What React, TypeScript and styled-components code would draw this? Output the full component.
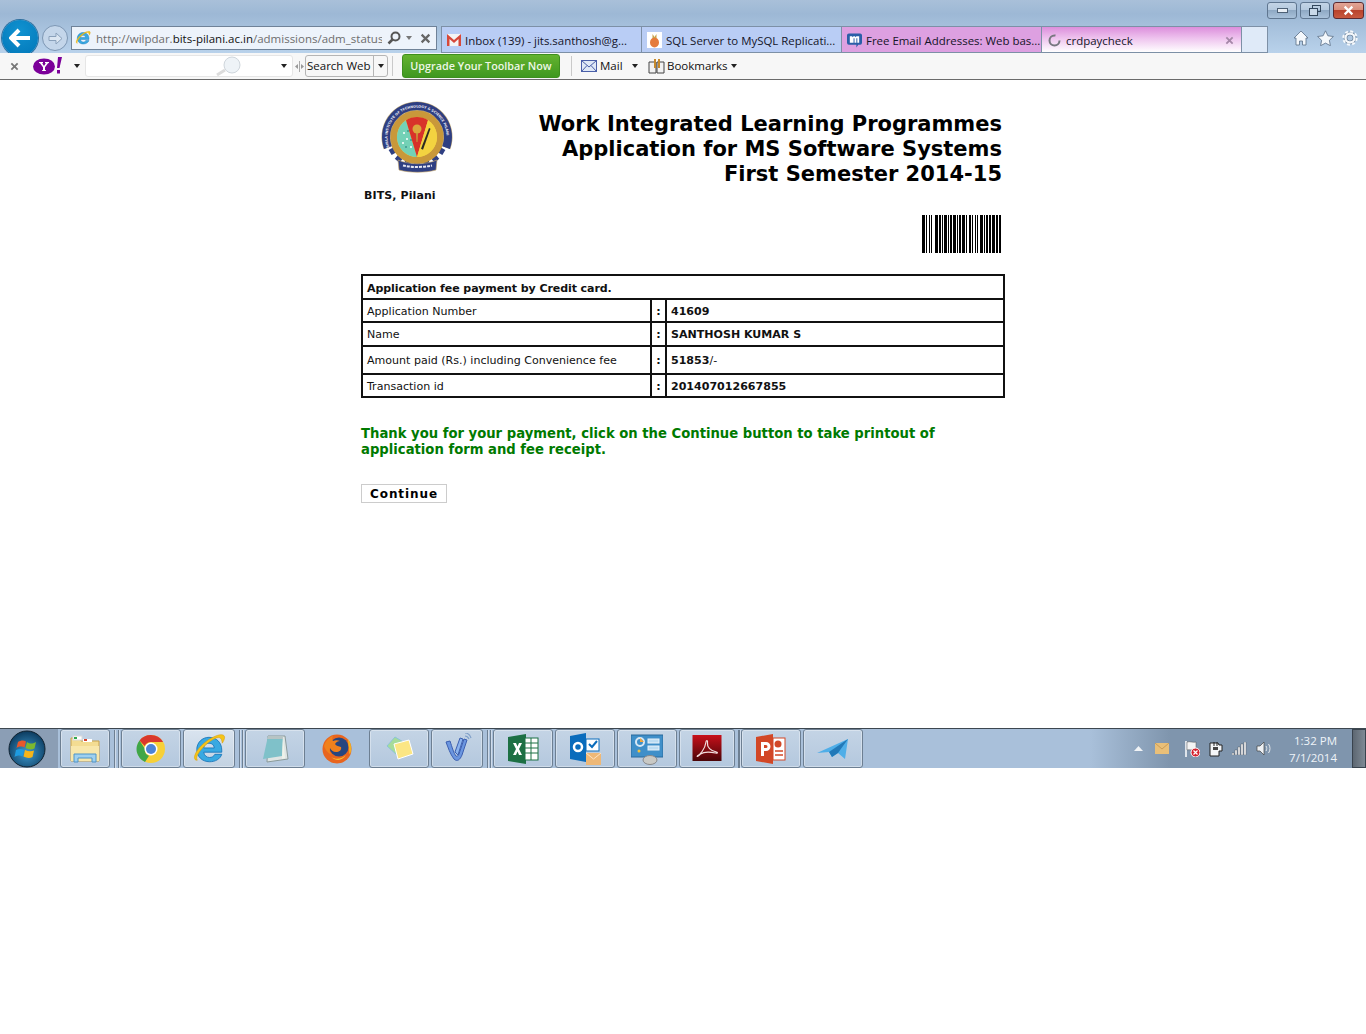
import styled, { createGlobalStyle } from 'styled-components'
import type { ReactNode } from 'react'

const GlobalStyle = createGlobalStyle`
  html, body {
    margin: 0;
    padding: 0;
    background: #fff;
  }
  body {
    font-family: 'DejaVu Sans', sans-serif;
  }
`

const Screen = styled.div`
  width: 1366px;
  height: 1034px;
  overflow: hidden;
  background: #fff;
  display: flex;
  flex-direction: column;
`

/* browser chrome */
const Chrome = styled.header`
  height: 53px;
  flex: none;
  background: linear-gradient(#a9c0d9 0, #9db8d5 14px, #b9d2eb 53px);
  display: flex;
  flex-direction: column;
`

const TitleRow = styled.div`
  height: 26px;
  flex: none;
  display: flex;
  justify-content: flex-end;
  padding: 2px 2px 0 0;
  gap: 3px;
  box-sizing: border-box;
`

const WinButton = styled.div<{ $w: number; $close?: boolean }>`
  width: ${p => p.$w}px;
  height: 17px;
  box-sizing: border-box;
  border: 1px solid ${p => (p.$close ? '#5c2a30' : '#5f7690')};
  border-radius: 3px;
  display: flex;
  align-items: center;
  justify-content: center;
  background: ${p =>
    p.$close
      ? 'linear-gradient(#e2a596 0, #d88e7c 45%, #b9432c 50%, #c8593f 100%)'
      : 'linear-gradient(#c3d4e6 0, #b5c9de 45%, #8fa9c4 50%, #a9c1da 100%)'};
`

const NavRow = styled.div`
  height: 27px;
  flex: none;
  display: flex;
  align-items: flex-start;
`

const BackCluster = styled.div`
  width: 71px;
  height: 27px;
  flex: none;
  position: relative;
`

const BackCircle = styled.div`
  position: absolute;
  left: 2px;
  top: -6px;
  width: 36px;
  height: 36px;
  border-radius: 50%;
  background: radial-gradient(circle at 50% 30%, #1192d0, #0076b8);
  box-shadow: 0 0 0 1px #2d6f9f;
  display: flex;
  align-items: center;
  justify-content: center;
  z-index: 2;
`

const ForwardCircle = styled.div`
  position: absolute;
  left: 42px;
  top: -1px;
  width: 26px;
  height: 26px;
  box-sizing: border-box;
  border: 1px solid #7d97b4;
  border-radius: 50%;
  background: #c4d6ea;
  display: flex;
  align-items: center;
  justify-content: center;
`

const AddressBar = styled.div`
  width: 366px;
  height: 24px;
  box-sizing: border-box;
  flex: none;
  margin-right: 4px;
  border: 1px solid #6f8298;
  background: #edf3fb;
  display: flex;
  align-items: center;
  padding: 0 5px 0 3px;
  svg {
    flex: none;
  }
`

const UrlText = styled.div`
  flex: 1;
  min-width: 0;
  overflow: hidden;
  white-space: nowrap;
  margin-left: 5px;
  font: 11.5px 'Open Sans', sans-serif;
  color: #6d6d6d;
  b {
    font-weight: 400;
    color: #111;
  }
`

const AddressTools = styled.div`
  display: flex;
  flex: none;
  align-items: center;
  gap: 5px;
  margin-left: 5px;
`

const TabStrip = styled.div`
  display: flex;
  height: 27px;
  border-top: 1px solid #7d90a6;
  border-bottom: 1px solid #7d90a6;
  box-sizing: border-box;
`

const tabBackground = {
  blue: '#b9cdf5',
  pink: '#dda0e1',
  active: 'linear-gradient(#dc8edc 0, #eec3ee 45%, #ffffff 100%)',
  blank: '#dfeaf8',
}

const Tab = styled.div<{ $w: number; $tone: keyof typeof tabBackground }>`
  width: ${p => p.$w}px;
  box-sizing: border-box;
  flex: none;
  border-left: 1px solid #7d90a6;
  background: ${p => tabBackground[p.$tone]};
  display: flex;
  align-items: center;
  padding: 1px 0 0 5px;
  gap: 4px;
  font: 11.45px 'Open Sans', sans-serif;
  color: #141428;
  white-space: nowrap;
  overflow: hidden;
  svg {
    flex: none;
  }
`

const TabEnd = styled(Tab)`
  border-right: 1px solid #7d90a6;
`

const TabClose = styled.span`
  margin-left: auto;
  margin-right: 7px;
  display: flex;
`

const ChromeIcons = styled.div`
  flex: 1;
  display: flex;
  justify-content: flex-end;
  gap: 8px;
  padding: 4px 8px 0 0;
`

/* yahoo toolbar */
const Toolbar = styled.div`
  height: 27px;
  flex: none;
  box-sizing: border-box;
  position: relative;
  z-index: 3;
  background: #f7f7f7;
  border-bottom: 1px solid #6b6b6b;
  display: flex;
  align-items: center;
  font: 11.5px 'Open Sans', sans-serif;
  color: #111;
`

const CloseMark = styled.span`
  width: 32px;
  padding-left: 10px;
  box-sizing: border-box;
  display: flex;
  flex: none;
`

const YahooBadge = styled.div`
  width: 32px;
  flex: none;
  display: flex;
`

const Caret = styled.span<{ $gap?: number; $after?: number; $color?: string }>`
  width: 0;
  height: 0;
  flex: none;
  margin-left: ${p => p.$gap ?? 0}px;
  margin-right: ${p => p.$after ?? 0}px;
  border-left: 3.5px solid transparent;
  border-right: 3.5px solid transparent;
  border-top: 4px solid ${p => p.$color ?? '#222'};
`

const SearchField = styled.div`
  width: 208px;
  height: 22px;
  margin-left: 5px;
  flex: none;
  box-sizing: border-box;
  background: #fff;
  border: 1px solid #e6e6e6;
  border-radius: 3px;
  display: flex;
  align-items: center;
  padding-left: 130px;
  gap: 37px;
`

const Grip = styled.span`
  flex: none;
  display: flex;
  width: 12px;
  justify-content: center;
`

const SearchButton = styled.div`
  width: 83px;
  height: 22px;
  box-sizing: border-box;
  flex: none;
  border: 1px solid #b5b5b5;
  border-radius: 3px;
  display: flex;
  align-items: center;
  padding-left: 1px;
`

const ToolLabel = styled.span`
  padding-bottom: 2px;
  white-space: nowrap;
`

const SearchLabel = styled(ToolLabel)`
  flex: 1;
`

const SearchDrop = styled.span`
  width: 13px;
  align-self: stretch;
  border-left: 1px solid #b5b5b5;
  display: flex;
  align-items: center;
  justify-content: center;
`

const Rule = styled.span<{ $left: number; $right: number }>`
  width: 1px;
  height: 20px;
  flex: none;
  background: #c9c9c9;
  margin: 0 ${p => p.$right}px 0 ${p => p.$left}px;
`

const UpgradeButton = styled.button`
  width: 158px;
  height: 24px;
  flex: none;
  padding: 0 0 2px;
  border: 1px solid #3e8f1e;
  border-radius: 3px;
  background: linear-gradient(#64b32f, #3f9820);
  color: #eef7e6;
  font: 600 10.8px 'Open Sans', sans-serif;
`

const ToolItem = styled.span<{ $w: number; $gap: number; $left?: number }>`
  width: ${p => p.$w}px;
  flex: none;
  margin-left: ${p => p.$left ?? 0}px;
  display: flex;
  align-items: center;
  gap: ${p => p.$gap}px;
`

/* page content */
const Page = styled.main`
  height: 648px;
  flex: none;
  display: flex;
  justify-content: center;
  background: #fff;
`

const Sheet = styled.div`
  width: 644px;
  display: flex;
  flex-direction: column;
`

const Masthead = styled.div`
  display: flex;
  justify-content: space-between;
  padding: 20px 3px 0;
  height: 194px;
  box-sizing: border-box;
`

const Crest = styled.div`
  display: flex;
  flex-direction: column;
  align-items: flex-start;
`

const CrestLogo = styled.div`
  margin-left: 15px;
  height: 89px;
`

const CrestName = styled.div`
  font-size: 11px;
  font-weight: 700;
  line-height: 14px;
  letter-spacing: 0.1px;
  color: #111;
`

const Titles = styled.div`
  display: flex;
  flex-direction: column;
  align-items: flex-end;
  padding-top: 12px;
`

const TitleLine = styled.h1`
  margin: 0;
  font-size: 21px;
  line-height: 25px;
  font-weight: 700;
  color: #000;
  white-space: nowrap;
`

const Barcode = styled.div`
  margin-top: 28px;
  height: 38px;
`

const InfoTable = styled.table`
  width: 644px;
  border-collapse: collapse;
  table-layout: fixed;
  font-size: 11.05px;
  color: #111;
`

const Column = styled.col<{ $w?: number }>`
  width: ${p => (p.$w ? `${p.$w}px` : 'auto')};
`

const Row = styled.tr<{ $h: number }>`
  height: ${p => p.$h}px;
`

const Cell = styled.td<{ $strong?: boolean; $center?: boolean; $tight?: boolean; $top: number }>`
  border: 2px solid #111;
  padding: ${p => p.$top}px ${p => (p.$center ? 0 : 4)}px 0;
  font-weight: ${p => (p.$strong ? 700 : 400)};
  text-align: ${p => (p.$center ? 'center' : 'left')};
  letter-spacing: ${p => (p.$tight ? '-0.1px' : 'normal')};
  white-space: nowrap;
  span {
    font-weight: 400;
  }
`

const Notice = styled.p`
  margin: 28px 0 0;
  width: 600px;
  font-size: 13.2px;
  line-height: 16px;
  font-weight: 700;
  color: #007a00;
`

const ContinueButton = styled.button`
  align-self: flex-start;
  margin-top: 26px;
  width: 86px;
  height: 19px;
  padding: 0;
  background: #fff;
  border: 1px solid #ccc;
  font: 700 12px 'DejaVu Sans', sans-serif;
  letter-spacing: 0.9px;
  color: #000;
`

/* taskbar */
const Taskbar = styled.footer`
  height: 40px;
  flex: none;
  box-sizing: border-box;
  border-top: 1px solid #3d4750;
  background: linear-gradient(90deg, #a9c0da 0, #a9c0da 1090px, #7f95ad 1170px, #7f95ad 100%);
  display: flex;
  align-items: stretch;
`

const StartArea = styled.div`
  width: 58px;
  flex: none;
  background: #8b9eb5;
  display: flex;
  align-items: center;
  padding-left: 8px;
  box-sizing: border-box;
  margin-right: 2px;
`

const TaskButton = styled.div<{ $w: number; $plain?: boolean; $active?: boolean }>`
  width: ${p => p.$w}px;
  flex: none;
  box-sizing: border-box;
  margin: 0 2px 0 0;
  border: ${p => (p.$plain ? '1px solid transparent' : '1px solid #6d7f92')};
  border-radius: 3px;
  background: ${p =>
    p.$plain
      ? 'transparent'
      : p.$active
        ? 'linear-gradient(#d9e4ef, #c3d2e2)'
        : 'linear-gradient(#c4d4e5, #b4c8de)'};
  box-shadow: ${p => (p.$plain ? 'none' : 'inset 0 0 0 1px rgba(255,255,255,.35)')};
  display: flex;
  align-items: center;
  justify-content: center;
`

const GroupGap = styled.div<{ $w: number }>`
  width: ${p => p.$w}px;
  flex: none;
  display: flex;
  justify-content: space-evenly;
  padding-top: 1px;
  box-sizing: border-box;
  &::before,
  &::after {
    content: '';
    width: 1px;
    background: #6d7f92;
    box-shadow: 1px 0 0 rgba(255, 255, 255, 0.45);
  }
`

const Tray = styled.div`
  margin-left: auto;
  display: flex;
  align-items: center;
`

const TrayIcons = styled.div`
  display: flex;
  align-items: center;
  gap: 8px;
`

const TrayArrow = styled.svg`
  margin-right: 4px;
`

const TrayMail = styled.svg`
  margin-right: 7px;
`

const Clock = styled.div`
  width: 60px;
  margin: 0 15px 0 5px;
  text-align: right;
  font: 11.5px/17px 'Open Sans', sans-serif;
  color: #eef3f8;
  flex: none;
`

const ShowDesktop = styled.div`
  width: 14px;
  align-self: stretch;
  flex: none;
  box-sizing: border-box;
  border: 1px solid #39434e;
  background: linear-gradient(90deg, #5d6772, #7f8a95);
`

const Blank = styled.div`
  flex: 1;
  background: #fff;
`

/* drawings */
const IeGlyph = ({ size }: { size: number }) => (
  <svg width={size} height={size} viewBox="0 0 32 32">
    <path d="M16 5c7 0 12 5 12 12v2H11c.5 3 2.600 5 5.500 5 2.200 0 4-1 5-3h6.500c-1.500 4.500-6 7-11.500 7C9.500 28 4.500 23 4.500 16.500S9.500 5 16 5Zm-5 10h10c-.3-2.700-2.200-4.500-5-4.500s-4.600 1.800-5 4.500Z" fill="#39a9e1" stroke="#1774b8" strokeWidth=".8" />
    <path d="M3 26c-3-4 5-14 13-19 6-3.700 12-5.700 14-3.700 1.500 1.500.2 4.700-1.500 7.200-.3-2.600-1-5-3-5.300C21 4.600 10 13 5.500 21 4.300 23.200 4 25 5 26.500c-.8.300-1.500.1-2-.5Z" fill="#f5c518" stroke="#d99a0a" strokeWidth=".5" />
  </svg>
)

const TinyX = ({ size, color }: { size: number; color: string }) => (
  <svg width={size} height={size} viewBox="0 0 10 10">
    <path d="M1.500 1.500 8.500 8.500M8.500 1.500 1.500 8.500" stroke={color} strokeWidth="2" />
  </svg>
)

const Crestmark = () => (
  <svg width="76" height="76" viewBox="0 0 76 76">
    <defs>
      <path id="crest-arc" d="M10.300 47.100A29.500 29.500 0 1 1 65.700 47.100" />
    </defs>
    <g fill="#2f3f82">
      {Array.from({ length: 18 }, (_, i) => (
        <rect key={i} x="35" y="6" width="6" height="8" transform={`rotate(${i * 20} 38 37)`} />
      ))}
    </g>
    <circle cx="38" cy="37" r="27" fill="#c9983a" />
    <path d="M8.900 47.600A31 31 0 1 1 67.100 47.600" fill="none" stroke="#c4ad7c" strokeWidth="9" />
    <path d="M8.900 47.600A31 31 0 1 1 67.100 47.600" fill="none" stroke="#2f3f82" strokeWidth="8" />
    <circle cx="38" cy="37" r="20" fill="#f0cf45" />
    <path d="M38 57A20 20 0 0 1 27 20.300L38 57Z" fill="#73d1b6" />
    <path d="M27 20.300A20 20 0 0 1 49 20.300L38 57Z" fill="#d8322a" />
    <path d="M49 20.300A20 20 0 0 1 38 57Z" fill="#f3d340" />
    <circle cx="38" cy="29" r="4.500" fill="#dba63c" />
    <path d="M37 33h2l-.5 9h-1Z" fill="#c9983a" />
    <path d="M50 28l1.500.8-7.500 21-2-1Z" fill="#2c2a22" />
    <g fill="#fff">
      <circle cx="25" cy="33" r="1" />
      <circle cx="28" cy="39" r="1" />
      <circle cx="24" cy="43" r="1" />
      <circle cx="32" cy="47" r="1" />
    </g>
    <g fill="#1f6f74">
      <circle cx="29" cy="31" r=".8" />
      <circle cx="32" cy="40" r=".8" />
      <circle cx="27" cy="47" r=".8" />
    </g>
    <text fontSize="3.400" fontWeight="700" fill="#e7e7f2">
      <textPath href="#crest-arc">BIRLA INSTITUTE OF TECHNOLOGY &amp; SCIENCE PILANI</textPath>
    </text>
    <path d="M19 60c12 5 27 5 39 0l-1 10c-11 3-26 3-37 0Z" fill="#2f3f82" stroke="#c9a868" strokeWidth=".6" />
    <path d="M24 65.500c9 2 20 2 29 0" fill="none" stroke="#e7e7f2" strokeWidth="2" strokeDasharray="3 1" />
  </svg>
)

const barWidths = [
  3, 1, 1, 2, 1, 1, 1, 3, 3, 1, 2, 1, 1, 1, 3, 1, 1, 1, 2, 1, 3, 1, 1, 1, 2, 1, 3, 1, 1, 2, 2, 1, 1, 2, 1, 1, 1, 2,
  3, 1, 1, 1, 2, 1, 2, 1, 3, 1, 2, 1, 2,
]

const BarcodeBars = () => {
  let x = 0
  return (
    <svg width="80" height="38" viewBox="0 0 80 38">
      {barWidths.map((w, i) => {
        const at = x
        x += w
        return i % 2 === 0 ? <rect key={i} x={at} y="0" width={w} height="38" fill="#000" /> : null
      })}
    </svg>
  )
}

const StartOrb = () => (
  <svg width="38" height="38" viewBox="0 0 38 38">
    <defs>
      <radialGradient id="orb" cx="50%" cy="60%" r="60%">
        <stop offset="0" stopColor="#3f9bd0" />
        <stop offset="1" stopColor="#0b3a5e" />
      </radialGradient>
    </defs>
    <circle cx="19" cy="19" r="18" fill="url(#orb)" stroke="#10212f" />
    <path d="M10 12c3-2 6-2 8-.500l-1.500 6c-2-1.300-5-1.500-8 .5Z" fill="#e8582c" />
    <path d="M19 12c3 2 5 2 9 0l-1.500 6.500c-3 1.500-6 1.200-9-.5Z" fill="#7cb82f" />
    <path d="M8 20c3-1.500 6-1.500 8 0l-1.500 6.500c-2-1.500-5-1.500-8 .5Z" fill="#1e9be0" />
    <path d="M17 20c3 1.500 6 1.800 9 .5L24.500 27c-3 1.500-6 1-9-.5Z" fill="#f7b519" />
  </svg>
)

const FolderIcon = () => (
  <svg width="32" height="32" viewBox="0 0 32 32">
    <path d="M2 5h10v3h18v20H2Z" fill="#f3dc92" stroke="#c7a24e" />
    <rect x="4" y="3" width="9" height="4" fill="#fff" stroke="#d9d9d9" />
    <rect x="5" y="4" width="3" height="2" fill="#2ea84f" />
    <rect x="14" y="6" width="9" height="3" fill="#fff" />
    <rect x="15" y="6" width="3" height="2" fill="#d8442c" />
    <path d="M2 13h28v15H2Z" fill="#f8e7ab" />
    <path d="M5 29v-8h22v8h-4v-4H9v4Z" fill="#9fd0ef" stroke="#4e94c8" />
  </svg>
)

const ChromeIcon = () => (
  <svg width="30" height="30" viewBox="0 0 30 30">
    <circle cx="15" cy="15" r="14" fill="#f7d038" />
    <path d="M15 1a14 14 0 0 1 12.100 7H15a7 7 0 0 0-6.300 4L3.500 6.500A14 14 0 0 1 15 1Z" fill="#d9382c" />
    <path d="M3.500 6.500 9 15a6 6 0 0 0 4 6.700L9 28A14 14 0 0 1 3.500 6.500Z" fill="#3fa648" />
    <circle cx="15" cy="15" r="6.500" fill="#fff" />
    <circle cx="15" cy="15" r="5" fill="#4c84d6" />
  </svg>
)

const NotesIcon = () => (
  <svg width="32" height="32" viewBox="0 0 32 32">
    <path d="M9 3h17l3 23-21 3Z" fill="#dfe5e4" stroke="#8a9a9a" />
    <path d="M9 3h15l-1 20-19 3Z" fill="#7fc1c9" />
    <path d="M9 3h15v3H8Z" fill="#b7c4c4" />
    <path d="M24 3l2 22-3 1Z" fill="#eef2e9" />
  </svg>
)

const FirefoxIcon = () => (
  <svg width="32" height="32" viewBox="0 0 32 32">
    <circle cx="16" cy="16" r="14.500" fill="#e8651f" />
    <circle cx="18" cy="14" r="9.500" fill="#27467f" />
    <path d="M27 6c3 4 4 9 2.500 14-2 2-1 0-1.500-4-.5-4-1-7-1-10Z" fill="#f6b21d" />
    <path d="M3 16C3 9 7 5 12 3c-1 2-1 4 0 5 2-1 5-1 7 0-2 0-4 1-5 3 1 2 4 2 6 3 1 3-2 5-5 5-3 0-5-2-6-4-1 2 0 5 2 7-4-2-8-6-8-11Z" fill="#f0811c" />
    <path d="M10 24c5 3 11 2 15-2-3 5-9 7-15 2Z" fill="#f9c12e" />
  </svg>
)

const StickyIcon = () => (
  <svg width="32" height="32" viewBox="0 0 32 32">
    <path d="M4 13 12 4l10 6-8 12Z" fill="#a6dc9a" stroke="#8cc4d8" />
    <path d="M11 11 26 7l4 14-15 5Z" fill="#fbe684" stroke="#fff" />
  </svg>
)

const WaveIcon = () => (
  <svg width="30" height="32" viewBox="0 0 30 32">
    <path d="M4 9c2 5 4 12 8 17 3 3 6 1 8-4l5-15-3-1-5 15c-1 2-2 3-3 2-2-2-4-9-6-15Z" fill="#6b96e0" stroke="#3c5fb0" />
    <path d="M13 19 18 5l3 1-5 16Z" fill="#8cb4ee" stroke="#3c5fb0" />
    <path d="M23 3c2 0 3 1 4 3M23 0c3 0 5 2 6 5" stroke="#7f9fc8" strokeWidth="1.200" fill="none" />
  </svg>
)

const ExcelIcon = () => (
  <svg width="32" height="32" viewBox="0 0 32 32">
    <path d="M1 4 19 1v30L1 28Z" fill="#1d7044" />
    <rect x="18" y="5" width="13" height="22" fill="#fff" stroke="#1d7044" />
    <path d="M18 10h13M18 15h13M18 20h13M24 5v22" stroke="#1d7044" />
    <path d="M6 10h3l1.500 3.500L12 10h3l-3 6 3 6h-3l-1.500-3.500L9 22H6l3-6Z" fill="#fff" />
  </svg>
)

const OutlookIcon = () => (
  <svg width="32" height="34" viewBox="0 0 32 34">
    <path d="M1 4 17 1v29L1 27Z" fill="#0a6cbc" />
    <circle cx="9" cy="15" r="4" fill="none" stroke="#fff" strokeWidth="2.500" />
    <rect x="17" y="7" width="13" height="12" fill="#fff" stroke="#0a6cbc" />
    <path d="M20 12l3 3 5-6" stroke="#0a6cbc" strokeWidth="2" fill="none" />
    <rect x="17" y="21" width="15" height="12" fill="#eeb877" />
    <path d="M17 21l7.500 6 7.500-6" stroke="#fbe3c4" fill="none" />
  </svg>
)

const PanelIcon = () => (
  <svg width="32" height="32" viewBox="0 0 32 32">
    <rect x="0" y="2" width="32" height="22" fill="#3f8fc9" stroke="#2a6a9c" />
    <circle cx="9" cy="9" r="4" fill="none" stroke="#d9e8f4" strokeWidth="2" />
    <path d="M9 5l4 4H9Z" fill="#f4a63a" />
    <rect x="17" y="6" width="11" height="4" fill="#bcdcf2" stroke="#e8f2fa" />
    <rect x="17" y="13" width="11" height="4" fill="#bcdcf2" stroke="#e8f2fa" />
    <circle cx="8" cy="18" r="1.500" fill="#f4c23a" />
    <ellipse cx="19" cy="27" rx="7" ry="4.500" fill="#c9c9c5" stroke="#88888a" />
  </svg>
)

const AcrobatIcon = () => (
  <svg width="30" height="30" viewBox="0 0 30 30">
    <defs>
      <linearGradient id="acro" x1="0" y1="0" x2="0" y2="1">
        <stop offset="0" stopColor="#c8101a" />
        <stop offset="1" stopColor="#4a0508" />
      </linearGradient>
    </defs>
    <rect width="29" height="26" x=".5" y="1" fill="url(#acro)" />
    <path d="M5 22c3-1 8-7 9-14 .3-2 2-2 1.500 1-.6 4 3 8 9 9 1.500.3 1 1.500-1 1-5-1-12-1-15 1-2 2-4 3-3 2Z" fill="none" stroke="#f2dede" strokeWidth="1.200" />
  </svg>
)

const PowerPointIcon = () => (
  <svg width="32" height="32" viewBox="0 0 32 32">
    <path d="M1 4 18 1v30L1 28Z" fill="#d24726" />
    <rect x="18" y="5" width="12" height="22" fill="#fff" stroke="#d24726" />
    <circle cx="23" cy="11" r="3.500" fill="#d24726" />
    <path d="M20 18h8M20 22h8" stroke="#d24726" strokeWidth="1.500" />
    <path d="M6 9h5a4 4 0 0 1 0 9H9v5H6Zm3 3v3h2a1.500 1.500 0 0 0 0-3Z" fill="#fff" />
  </svg>
)

const PlaneIcon = () => (
  <svg width="34" height="28" viewBox="0 0 34 28">
    <path d="M1 18 32 4l-3 20-7-6-6 4-3-5Z" fill="#4faee8" />
    <path d="M13 17 32 4 22 18l-6 4Z" fill="#2279b8" />
  </svg>
)

const TrayGlyphs = () => (
  <TrayIcons>
    <TrayArrow width="9" height="5" viewBox="0 0 9 5">
      <path d="M4.500 0 9 5H0Z" fill="#f0f3f6" />
    </TrayArrow>
    <TrayMail width="14" height="11" viewBox="0 0 14 11">
      <rect width="14" height="11" fill="#e9bf78" />
      <path d="M0 0l7 6 7-6" stroke="#c99b55" fill="none" />
    </TrayMail>
    <svg width="16" height="16" viewBox="0 0 16 16">
      <path d="M2 0v16" stroke="#fff" strokeWidth="1.500" />
      <path d="M3 1c3-1 6 1 9 0v8c-3 1-6-1-9 0Z" fill="#f4f4f4" stroke="#555" strokeWidth=".5" />
      <circle cx="11.500" cy="11.500" r="4.500" fill="#d5232f" stroke="#fff" />
      <path d="M9.500 9.500l4 4M13.500 9.500l-4 4" stroke="#fff" strokeWidth="1.200" />
    </svg>
    <svg width="16" height="16" viewBox="0 0 16 16">
      <path d="M2 2h8l1 2h3v6h-3v5H2Z" fill="#f4f6f8" stroke="#222" />
      <path d="M6 1v4M9 1v4" stroke="#222" />
      <path d="M5 6h5v3H5Z" fill="#444" />
    </svg>
    <svg width="16" height="13" viewBox="0 0 16 13">
      {[2, 5, 8, 11, 13].map((h, i) => (
        <rect key={i} x={i * 3} y={13 - h} width="2" height={h} fill="#f2f4f6" stroke="#333" strokeWidth=".3" />
      ))}
    </svg>
    <svg width="16" height="15" viewBox="0 0 16 15">
      <path d="M1 5h3l4-4v13l-4-4H1Z" fill="#eef1f4" stroke="#444" strokeWidth=".7" />
      <path d="M10 5c1 1.500 1 3.500 0 5M12.500 3c2 2.500 2 6.500 0 9" stroke="#e4e8ec" fill="none" />
    </svg>
  </TrayIcons>
)

const taskGroups: { gap: number; items: { w: number; plain?: boolean; active?: boolean; icon: ReactNode }[] }[] = [
  { gap: 9, items: [{ w: 50, icon: <FolderIcon /> }] },
  {
    gap: 8,
    items: [
      { w: 60, icon: <ChromeIcon /> },
      { w: 52, active: true, icon: <IeGlyph size={34} /> },
    ],
  },
  {
    gap: 8,
    items: [
      { w: 60, icon: <NotesIcon /> },
      { w: 60, plain: true, icon: <FirefoxIcon /> },
      { w: 60, icon: <StickyIcon /> },
      { w: 52, icon: <WaveIcon /> },
    ],
  },
  {
    gap: 4,
    items: [
      { w: 60, icon: <ExcelIcon /> },
      { w: 60, icon: <OutlookIcon /> },
      { w: 60, icon: <PanelIcon /> },
      { w: 56, icon: <AcrobatIcon /> },
    ],
  },
  {
    gap: 0,
    items: [
      { w: 60, icon: <PowerPointIcon /> },
      { w: 60, icon: <PlaneIcon /> },
    ],
  },
]

const rows = [
  { h: 23, top: 2, label: 'Application Number', value: '41609' },
  { h: 24, top: 0, label: 'Name', value: 'SANTHOSH KUMAR S' },
  { h: 28, top: 0, label: 'Amount paid (Rs.) including Convenience fee', value: '51853', suffix: '/-' },
  { h: 23, top: 2, label: 'Transaction id', value: '201407012667855' },
]

export default function App() {
  return (
    <Screen>
      <GlobalStyle />
      <Chrome>
        <TitleRow>
          <WinButton $w={30}>
            <svg width="11" height="5" viewBox="0 0 11 5">
              <rect x=".5" y=".5" width="10" height="4" fill="#e8eef5" stroke="#4d6075" />
            </svg>
          </WinButton>
          <WinButton $w={30}>
            <svg width="12" height="11" viewBox="0 0 12 11">
              <rect x="3.500" y=".5" width="8" height="6" fill="none" stroke="#33475c" />
              <rect x=".5" y="3.500" width="8" height="7" fill="#c9d9e9" stroke="#33475c" />
            </svg>
          </WinButton>
          <WinButton $w={31} $close>
            <TinyX size={11} color="#fff" />
          </WinButton>
        </TitleRow>
        <NavRow>
          <BackCluster>
            <BackCircle>
              <svg width="22" height="20" viewBox="0 0 22 20">
                <path d="M10 2 2 10l8 8M3 10h18" stroke="#fff" strokeWidth="4" fill="none" />
              </svg>
            </BackCircle>
            <ForwardCircle>
              <svg width="15" height="13" viewBox="0 0 15 13">
                <path d="M1 4.500h7V1l6 5.500-6 5.500V8.500H1Z" fill="#dbe6f2" stroke="#8aa1bb" />
              </svg>
            </ForwardCircle>
          </BackCluster>
          <AddressBar>
            <IeGlyph size={16} />
            <UrlText>
              http://wilpdar.<b>bits-pilani.ac.in</b>/admissions/adm_status
            </UrlText>
            <AddressTools>
              <svg width="14" height="14" viewBox="0 0 14 14">
                <circle cx="8.500" cy="5.500" r="4" fill="none" stroke="#555" strokeWidth="2" />
                <path d="M5.500 8.500 1.500 12.500" stroke="#555" strokeWidth="2.500" />
              </svg>
              <Caret $after={3} $color="#777" />
              <TinyX size={11} color="#666" />
            </AddressTools>
          </AddressBar>
          <TabStrip>
            <Tab $w={200} $tone="blue">
              <svg width="14" height="12" viewBox="0 0 14 12">
                <rect width="14" height="12" fill="#f4f4f4" />
                <path d="M0 12V0l7 6 7-6v12h-2.500V5L7 9 2.500 5v7Z" fill="#d6483a" />
              </svg>
              Inbox (139) - jits.santhosh@g...
            </Tab>
            <Tab $w={200} $tone="blue">
              <svg width="15" height="16" viewBox="0 0 15 16">
                <rect width="15" height="16" fill="#fff" />
                <ellipse cx="7.500" cy="10.500" rx="4.500" ry="5" fill="#e57b3c" />
                <path d="M5.500 2l2 3 2-3v4h-4Z" fill="#c9a24c" />
              </svg>
              SQL Server to MySQL Replicati...
            </Tab>
            <Tab $w={200} $tone="pink">
              <svg width="15" height="15" viewBox="0 0 16 15">
                <path d="M0 2a2 2 0 0 1 2-2h12a2 2 0 0 1 2 2v8a2 2 0 0 1-2 2h-2l-2 3v-3H2a2 2 0 0 1-2-2Z" fill="#2b5fa8" />
                <path d="M3 10V3h2.500l.5 1 1-1h1.500l.5 1 1-1H13v7h-2V5h-1v5H8V5H7v5H5V5v5Z" fill="#fff" />
              </svg>
              Free Email Addresses: Web bas...
            </Tab>
            <Tab $w={200} $tone="active">
              <svg width="15" height="15" viewBox="0 0 15 15">
                <circle cx="7.500" cy="7.500" r="5" fill="none" stroke="#77777f" strokeWidth="2" strokeDasharray="24 8" />
              </svg>
              crdpaycheck
              <TabClose>
                <TinyX size={9} color="#a587a8" />
              </TabClose>
            </Tab>
            <TabEnd $w={27} $tone="blank" />
          </TabStrip>
          <ChromeIcons>
            <svg width="16" height="16" viewBox="0 0 16 16">
              <path d="M8 1 1 8h2v7h3.500v-4h3v4H13V8h2Z" fill="#f4f8fc" stroke="#5a6f86" strokeWidth=".8" />
            </svg>
            <svg width="17" height="16" viewBox="0 0 17 16">
              <path d="m8.500.8 2.400 5 5.500.7-4 3.800 1 5.400-4.900-2.600-4.900 2.600 1-5.400-4-3.800 5.500-.7Z" fill="#f4f8fc" stroke="#5a6f86" strokeWidth=".8" />
            </svg>
            <svg width="16" height="16" viewBox="0 0 16 16">
              <circle cx="8" cy="8" r="4.500" fill="none" stroke="#5a6f86" strokeWidth="3.600" />
              <circle cx="8" cy="8" r="4.500" fill="none" stroke="#f4f8fc" strokeWidth="2.400" />
              <circle cx="8" cy="8" r="6.700" fill="none" stroke="#f4f8fc" strokeWidth="2" strokeDasharray="3 2.260" />
            </svg>
          </ChromeIcons>
        </NavRow>
      </Chrome>

      <Toolbar>
        <CloseMark>
          <TinyX size={9} color="#777" />
        </CloseMark>
        <YahooBadge>
          <svg width="32" height="20" viewBox="0 0 32 20">
            <ellipse cx="12" cy="10.500" rx="11" ry="8" fill="#7b0099" />
            <path d="M7 6h4v1l-.8.3L12 10l1.800-2.700-.8-.3V6h4v1l-1 .2-3 4V14l1 .3v.7H10v-.7l1-.3v-2.800l-3-4L7 7Z" fill="#fff" />
            <path d="M26 1h4l-2.500 11h-2.500ZM25 14h3v3.500h-3Z" fill="#7b0099" />
          </svg>
        </YahooBadge>
        <Caret $gap={10} />
        <SearchField>
          <svg width="28" height="20" viewBox="0 0 28 20">
            <path d="M1 19 9 14" stroke="#dcdcdc" strokeWidth="3" />
            <circle cx="16" cy="9" r="8" fill="#eef3f7" stroke="#cfd6dc" />
          </svg>
          <Caret />
        </SearchField>
        <Grip>
          <svg width="9" height="11" viewBox="0 0 9 11">
            <path d="M4.500 0v11" stroke="#aaa" />
            <path d="M3 3 0 5.500 3 8ZM6 3l3 2.500L6 8Z" fill="#999" />
          </svg>
        </Grip>
        <SearchButton>
          <SearchLabel>Search Web</SearchLabel>
          <SearchDrop>
            <Caret />
          </SearchDrop>
        </SearchButton>
        <Rule $left={4} $right={9} />
        <UpgradeButton>Upgrade Your Toolbar Now</UpgradeButton>
        <Rule $left={11} $right={9} />
        <ToolItem $w={51} $gap={3}>
          <svg width="16" height="12" viewBox="0 0 16 12">
            <rect x=".5" y=".5" width="15" height="11" fill="#dfe8f6" stroke="#4a5fa8" />
            <path d="M.5.500 8 7l7.500-6.500M.5 11.500 6 5.500M15.500 11.500 10 5.500" stroke="#4a5fa8" fill="none" />
          </svg>
          <ToolLabel>Mail</ToolLabel>
        </ToolItem>
        <Caret />
        <ToolItem $w={90} $gap={2} $left={10}>
          <svg width="17" height="15" viewBox="0 0 17 15">
            <path d="M1 3h7v11H1ZM9 3h7v11H9Z" fill="#f2f2f2" stroke="#444" />
            <path d="M6 0h2v9H6ZM10 0h2v9h-2Z" fill="#c78a2c" />
          </svg>
          <ToolLabel>Bookmarks</ToolLabel>
          <Caret $gap={1} />
        </ToolItem>
      </Toolbar>

      <Page>
        <Sheet>
          <Masthead>
            <Crest>
              <CrestLogo>
                <Crestmark />
              </CrestLogo>
              <CrestName>BITS, Pilani</CrestName>
            </Crest>
            <Titles>
              <TitleLine>Work Integrated Learning Programmes</TitleLine>
              <TitleLine>Application for MS Software Systems</TitleLine>
              <TitleLine>First Semester 2014-15</TitleLine>
              <Barcode>
                <BarcodeBars />
              </Barcode>
            </Titles>
          </Masthead>
          <InfoTable>
            <colgroup>
              <Column $w={289} />
              <Column $w={15} />
              <Column />
            </colgroup>
            <tbody>
              <Row $h={24}>
                <Cell colSpan={3} $strong $tight $top={2}>
                  Application fee payment by Credit card.
                </Cell>
              </Row>
              {rows.map(row => (
                <Row key={row.label} $h={row.h}>
                  <Cell $top={row.top}>{row.label}</Cell>
                  <Cell $center $strong $top={row.top}>
                    :
                  </Cell>
                  <Cell $strong $top={row.top}>
                    {row.value}
                    {row.suffix && <span>{row.suffix}</span>}
                  </Cell>
                </Row>
              ))}
            </tbody>
          </InfoTable>
          <Notice>
            Thank you for your payment, click on the Continue button to take printout of application form and fee
            receipt.
          </Notice>
          <ContinueButton>Continue</ContinueButton>
        </Sheet>
      </Page>

      <Taskbar>
        <StartArea>
          <StartOrb />
        </StartArea>
        {taskGroups.map(group => (
          <TaskGroup key={group.items[0].w + group.gap} gap={group.gap}>
            {group.items.map((item, i) => (
              <TaskButton key={i} $w={item.w} $plain={item.plain} $active={item.active}>
                {item.icon}
              </TaskButton>
            ))}
          </TaskGroup>
        ))}
        <Tray>
          <TrayGlyphs />
          <Clock>
            1:32 PM
            <br />
            7/1/2014
          </Clock>
          <ShowDesktop />
        </Tray>
      </Taskbar>
      <Blank />
    </Screen>
  )
}

function TaskGroup({ children, gap }: { children: ReactNode; gap: number }) {
  return (
    <>
      {children}
      {gap > 0 && <GroupGap $w={gap} />}
    </>
  )
}
